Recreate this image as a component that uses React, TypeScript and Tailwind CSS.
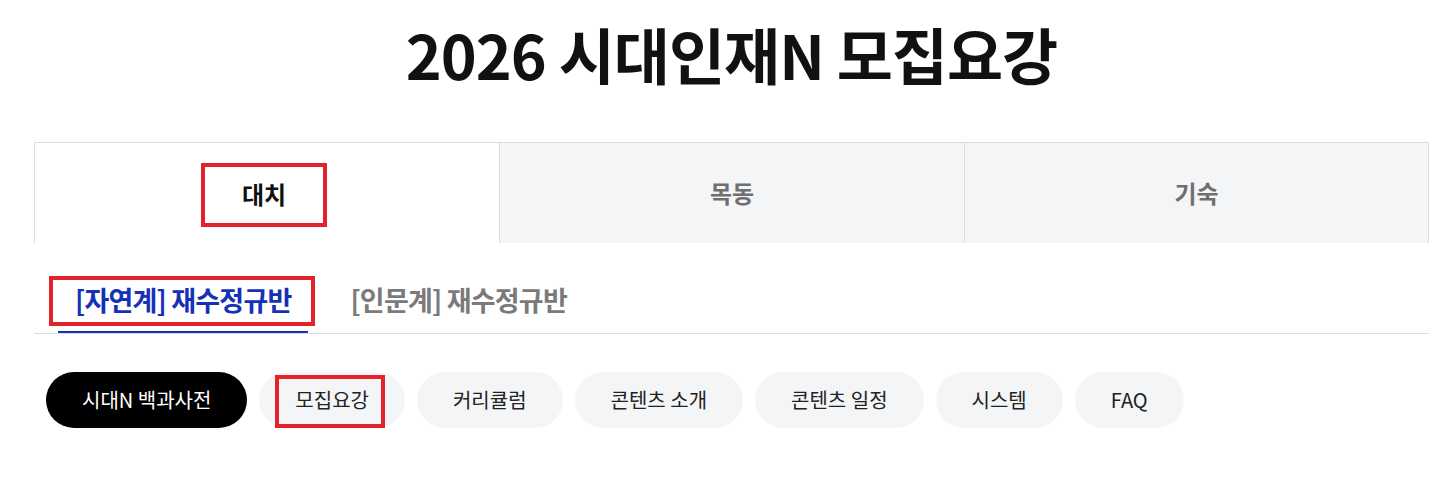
import React from "react"

const font = { fontFamily: '"Noto Sans CJK KR", "Noto Sans", sans-serif' }

const campuses = ["대치", "목동", "기숙"]
const courses = ["[자연계] 재수정규반", "[인문계] 재수정규반"]
const menus = ["시대N 백과사전", "모집요강", "커리큘럼", "콘텐츠 소개", "콘텐츠 일정", "시스템", "FAQ"]

const App: React.FC = () => {
  return (
    <div className="min-h-[499px] bg-white text-[#111]" style={font}>
      <div className="ml-[34px] w-[1395px]">
        {/* Title */}
        <h1 className="pt-[14px] pb-[4px] text-center text-[61px] font-bold leading-[80px] tracking-[-1px] text-[#111]">
          2026 시대인재N 모집요강
        </h1>

        {/* Campus tabs */}
        <div className="mt-[44px] grid h-[101px] grid-cols-3">
          {campuses.map((c, i) => (
            <div
              key={c}
              className={`flex items-center justify-center border-t border-l border-[#dcdcdc] ${
                i === 0 ? "bg-white" : "bg-[#f3f5f7]"
              } ${i === campuses.length - 1 ? "border-r" : ""}`}
            >
              {i === 0 ? (
                <span className="ml-[-6px] mt-[4px] inline-flex h-[64px] items-center border-4 border-[#e3222b] px-[37px] pb-[2px] text-[24px] font-bold text-[#111]">
                  {c}
                </span>
              ) : (
                <span className="text-[24px] font-bold text-[#6f6f6f]">{c}</span>
              )}
            </div>
          ))}
        </div>

        {/* Course sub tabs */}
        <div className="flex gap-[25px] border-b border-[#dcdcdc] pl-[24px] pt-[38px]">
          {courses.map((c, i) => (
            <div
              key={c}
              className={`relative px-[17px] pb-[12px] text-[27px] font-bold leading-[38px] tracking-[-0.8px] ${
                i === 0 ? "border-b-2 border-[#1431b8] text-[#1431b8]" : "text-[#7a7a7a]"
              }`}
            >
              {c}
              {i === 0 && (
                <span className="pointer-events-none absolute -left-[9px] -right-[7px] -top-[5px] bottom-[5px] border-4 border-[#e3222b]" />
              )}
            </div>
          ))}
        </div>

        {/* Menu pills */}
        <div className="mt-[38px] flex gap-[12px] pl-[12px]">
          {menus.map((m, i) => (
            <div
              key={m}
              className={`relative flex h-[56px] items-center rounded-full px-[36px] text-[20px] ${
                i === 0 ? "bg-black text-white" : "bg-[#f3f5f7] text-[#222]"
              }`}
            >
              {m}
              {i === 1 && (
                <span className="pointer-events-none absolute left-[16px] right-[20px] top-[3px] bottom-0 border-4 border-[#e3222b]" />
              )}
            </div>
          ))}
        </div>
      </div>
    </div>
  )
}

export default App
